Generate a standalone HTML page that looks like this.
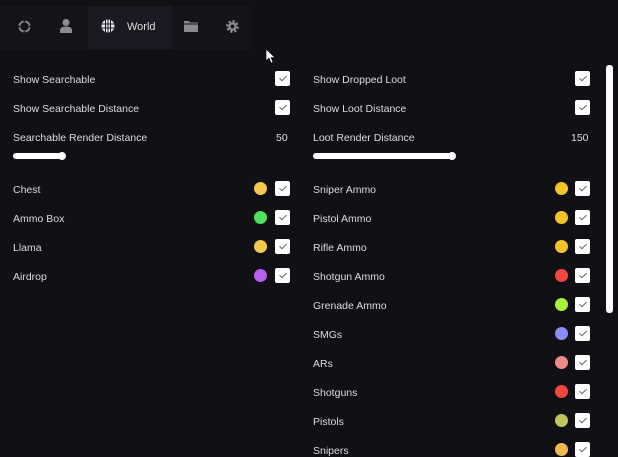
<!DOCTYPE html>
<html><head><style>
*{margin:0;padding:0;box-sizing:border-box}
body{width:618px;height:455px;background:#111115;font-family:"Liberation Sans",sans-serif;color:#dcdce0;font-size:10.5px;position:relative;overflow:hidden}
.bar{position:absolute;left:0;top:6px;width:252px;height:44px;background:#141419}
.tab{position:absolute;left:88px;top:6px;width:84px;height:43px;background:#1a1a23}
.ic{position:absolute}
.l{position:absolute;white-space:nowrap;margin-top:1px}
.cb{position:absolute;width:15px;height:15px;background:#fff;border-radius:2px}
.cb:after{content:"";position:absolute;left:5.5px;top:3px;width:3px;height:6px;border:solid #666;border-width:0 1.1px 1.1px 0;transform:rotate(45deg)}
.d{position:absolute;width:13px;height:13px;border-radius:50%}
.tr{position:absolute;height:6px;background:#fff;border-radius:3px}
.kn{position:absolute;width:8px;height:8px;background:#fff;border-radius:50%}
</style></head><body>
<div class="bar"></div><div class="tab"></div>
<svg class="ic" style="left:17px;top:19px" width="15" height="15" viewBox="0 0 16 16"><circle cx="8" cy="8" r="5.5" fill="none" stroke="#8a8a90" stroke-width="2"/><path d="M8 0v3M8 13v3M0 8h3M13 8h3" stroke="#141419" stroke-width="2"/></svg>
<svg class="ic" style="left:59px;top:18px" width="14" height="16" viewBox="0 0 14 16"><circle cx="7" cy="4.5" r="3.5" fill="#8a8a90"/><path d="M1 15v-3c0-2 2-3.5 6-3.5s6 1.5 6 3.5v3z" fill="#8a8a90"/></svg>
<svg class="ic" style="left:101px;top:19px" width="14" height="14" viewBox="0 0 14 14"><circle cx="7" cy="7" r="6.5" fill="#e8e8ee"/><path d="M0 5h14M0 9h14M7 0v14M4.5 1v12M9.5 1v12" stroke="#1a1a23" stroke-width="1"/></svg>
<div class="l" style="left:127px;top:20px;font-size:11px;color:#ddd">World</div>
<svg class="ic" style="left:184px;top:20px" width="14" height="12" viewBox="0 0 14 12"><path d="M0 1h5l1 1.5h8V12H0z" fill="#8a8a90"/><path d="M0 4h14" stroke="#141419" stroke-width="1"/></svg>
<svg class="ic" style="left:225px;top:19px" width="15" height="15" viewBox="0 0 16 16"><circle cx="8" cy="8" r="5" fill="none" stroke="#8a8a90" stroke-width="3.5" stroke-dasharray="2.2 1.7"/><circle cx="8" cy="8" r="4.5" fill="#8a8a90"/><circle cx="8" cy="8" r="2" fill="#141419"/></svg>
<svg class="ic" style="left:265px;top:48px" width="10" height="16" viewBox="0 0 10 16"><path d="M1 1v12l3-3 2 5 2-1-2-4.5h4z" fill="#fff" stroke="#000" stroke-width=".6"/></svg>

<div class="l" style="left:13px;top:73px">Show Searchable</div><div class="cb" style="left:275px;top:71px"></div>
<div class="l" style="left:13px;top:102px">Show Searchable Distance</div><div class="cb" style="left:275px;top:100px"></div>
<div class="l" style="left:13px;top:131px">Searchable Render Distance</div><div class="l" style="left:276px;top:131px">50</div>
<div class="tr" style="left:13px;top:153px;width:50px"></div><div class="kn" style="left:58px;top:152px"></div>

<div class="l" style="left:313px;top:73px">Show Dropped Loot</div><div class="cb" style="left:575px;top:71px"></div>
<div class="l" style="left:313px;top:102px">Show Loot Distance</div><div class="cb" style="left:575px;top:100px"></div>
<div class="l" style="left:313px;top:131px">Loot Render Distance</div><div class="l" style="left:571px;top:131px">150</div>
<div class="tr" style="left:313px;top:153px;width:140px"></div><div class="kn" style="left:448px;top:152px"></div>

<div style="position:absolute;left:606px;top:65px;width:7px;height:248px;background:#fff;border-radius:3px"></div>

<div class="l" style="left:13px;top:183px">Chest</div><div class="d" style="left:254px;top:182px;background:#f4c94e"></div><div class="cb" style="left:275px;top:181px"></div>
<div class="l" style="left:13px;top:212px">Ammo Box</div><div class="d" style="left:254px;top:211px;background:#4fe15e"></div><div class="cb" style="left:275px;top:210px"></div>
<div class="l" style="left:13px;top:241px">Llama</div><div class="d" style="left:254px;top:240px;background:#f4c94e"></div><div class="cb" style="left:275px;top:239px"></div>
<div class="l" style="left:13px;top:270px">Airdrop</div><div class="d" style="left:254px;top:269px;background:#b75ef0"></div><div class="cb" style="left:275px;top:268px"></div>

<div class="l" style="left:313px;top:183px">Sniper Ammo</div><div class="d" style="left:555px;top:182px;background:#f4c32a"></div><div class="cb" style="left:575px;top:181px"></div>
<div class="l" style="left:313px;top:212px">Pistol Ammo</div><div class="d" style="left:555px;top:211px;background:#f4c32a"></div><div class="cb" style="left:575px;top:210px"></div>
<div class="l" style="left:313px;top:241px">Rifle Ammo</div><div class="d" style="left:555px;top:240px;background:#f4c32a"></div><div class="cb" style="left:575px;top:239px"></div>
<div class="l" style="left:313px;top:270px">Shotgun Ammo</div><div class="d" style="left:555px;top:269px;background:#f2483f"></div><div class="cb" style="left:575px;top:268px"></div>
<div class="l" style="left:313px;top:299px">Grenade Ammo</div><div class="d" style="left:555px;top:298px;background:#a8f23c"></div><div class="cb" style="left:575px;top:297px"></div>
<div class="l" style="left:313px;top:328px">SMGs</div><div class="d" style="left:555px;top:327px;background:#8c8cf4"></div><div class="cb" style="left:575px;top:326px"></div>
<div class="l" style="left:313px;top:357px">ARs</div><div class="d" style="left:555px;top:356px;background:#f08a8a"></div><div class="cb" style="left:575px;top:355px"></div>
<div class="l" style="left:313px;top:386px">Shotguns</div><div class="d" style="left:555px;top:385px;background:#f2483f"></div><div class="cb" style="left:575px;top:384px"></div>
<div class="l" style="left:313px;top:415px">Pistols</div><div class="d" style="left:555px;top:414px;background:#c2c460"></div><div class="cb" style="left:575px;top:413px"></div>
<div class="l" style="left:313px;top:444px">Snipers</div><div class="d" style="left:555px;top:443px;background:#f4b84e"></div><div class="cb" style="left:575px;top:442px"></div>
</body></html>
